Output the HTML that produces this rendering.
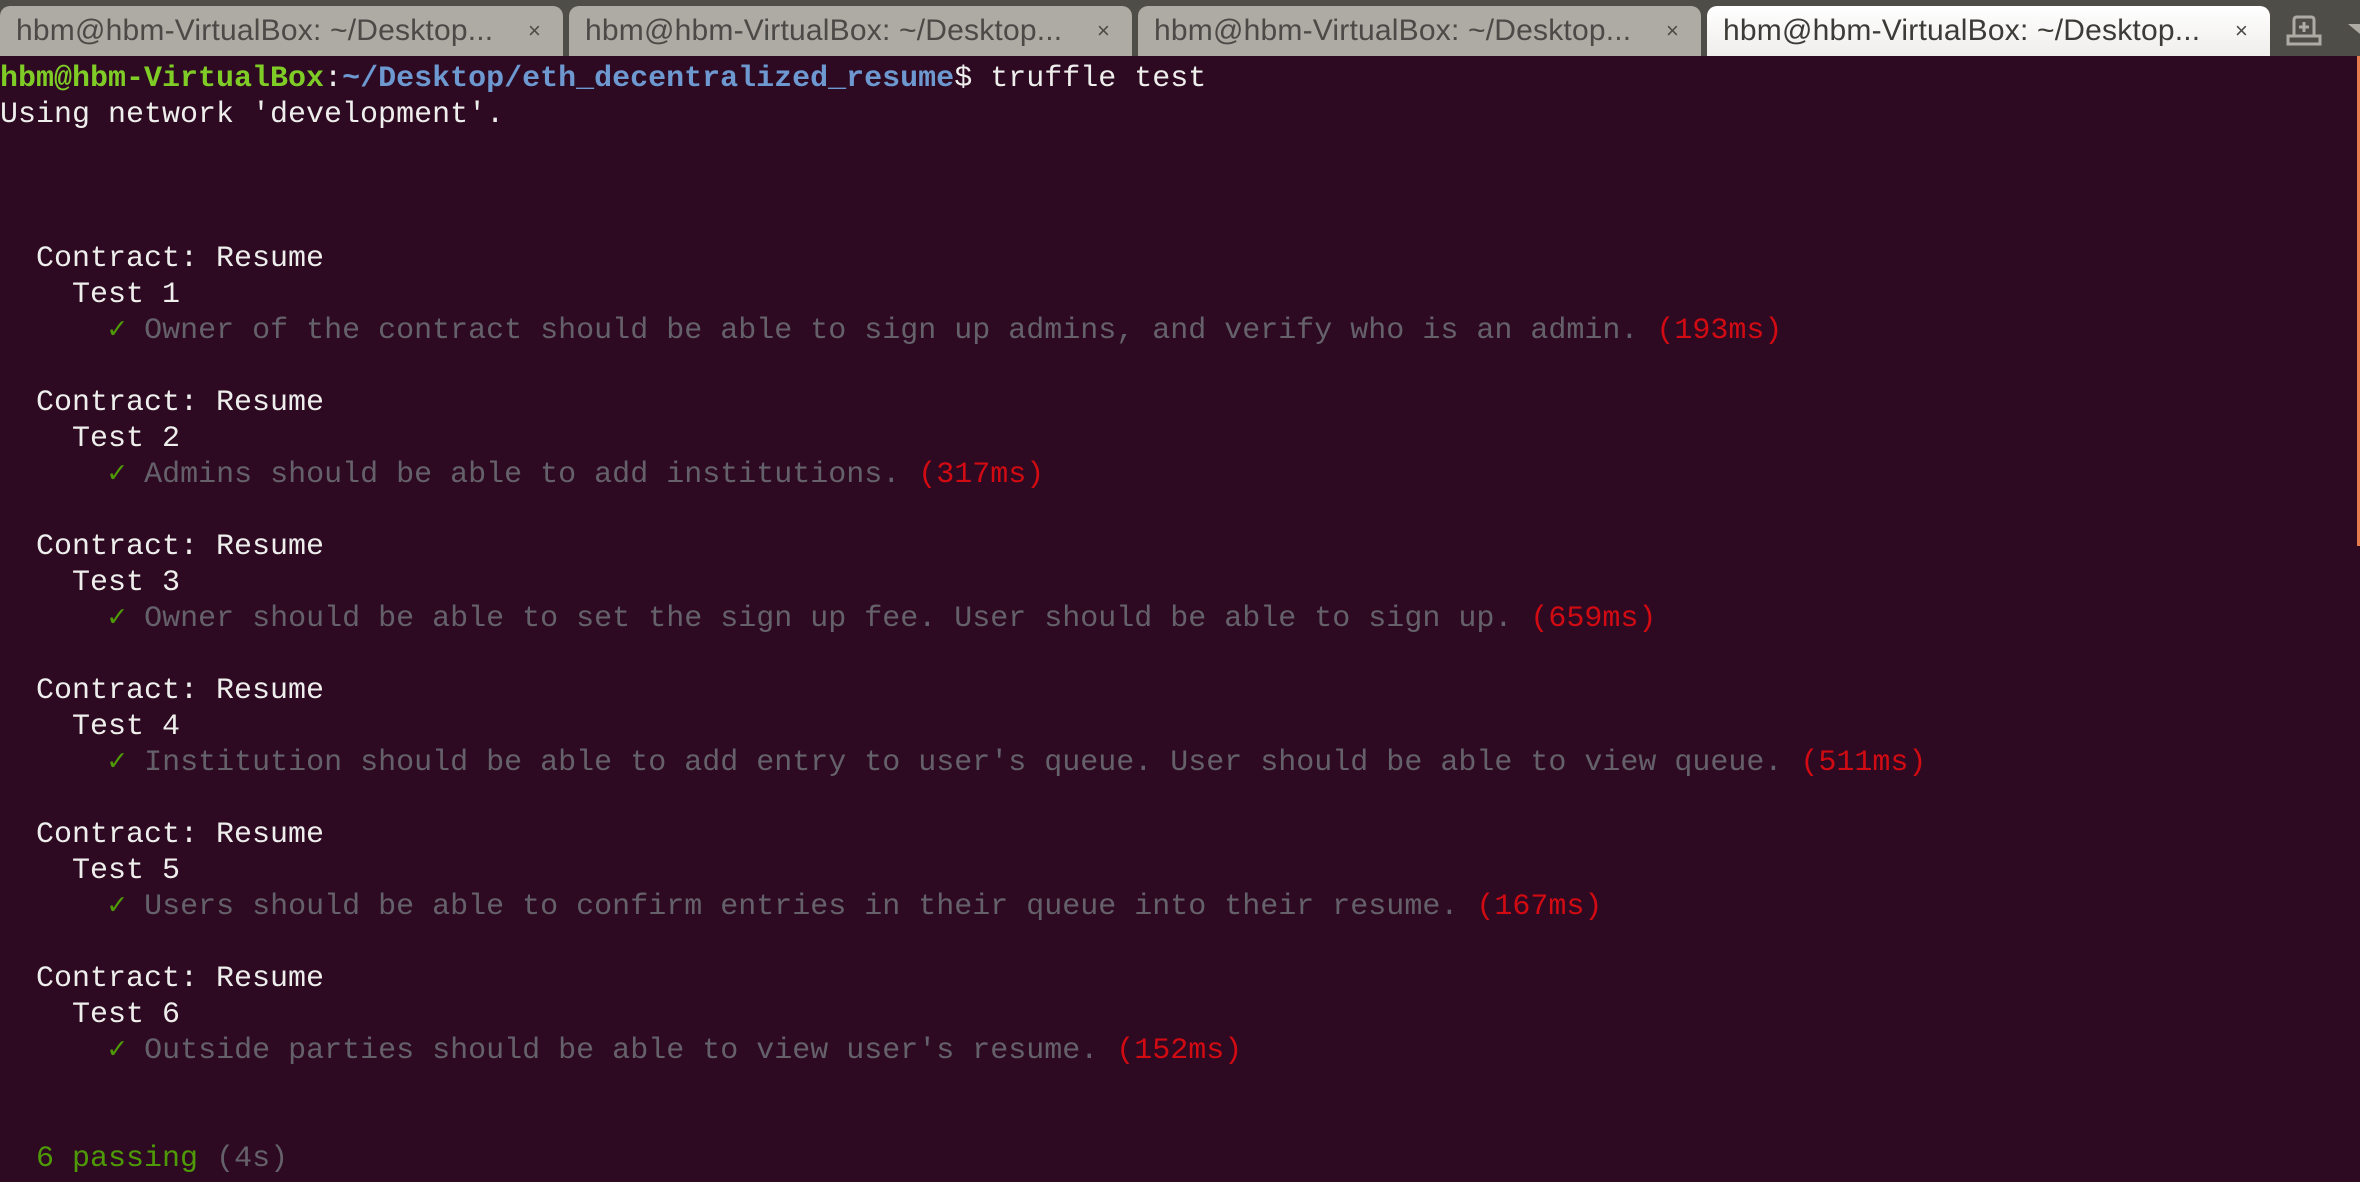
<!DOCTYPE html>
<html><head><meta charset="utf-8"><style>
html,body{margin:0;padding:0;width:2360px;height:1182px;overflow:hidden;background:#2d0a22;}
.bar{position:absolute;left:0;top:0;width:2360px;height:56px;background:#4f4d47;}
.tab{position:absolute;top:6px;height:50px;background:#aeaaa4;border-radius:10px 10px 0 0;font-family:"Liberation Sans",sans-serif;font-size:30px;color:#4c4a47;line-height:50px;white-space:nowrap;overflow:hidden;letter-spacing:0.2px;}
.tab span{position:absolute;left:16px;}
.tab i{position:absolute;right:22px;font-style:normal;font-size:22px;color:#4c4a47;}
.tab.act{background:linear-gradient(#ffffff,#f0eeec);color:#3c3b37;}
pre{position:absolute;left:0;top:61px;margin:0;font-family:"Liberation Mono",monospace;font-size:30px;line-height:36px;color:#eeeeec;}
.g{color:#7fcc26;font-weight:bold}.b{color:#6d98d0;font-weight:bold}
.c{color:#4e9a06}.d{color:#65616a}.r{color:#d20a12}.p{color:#4e9a06}
.sb{position:absolute;right:0;top:56px;width:3px;height:490px;background:#e77a4d;}
</style></head><body>
<div class="bar"></div>
<div class="tab" style="left:0;width:563px"><span>hbm@hbm-VirtualBox: ~/Desktop...</span><i>×</i></div>
<div class="tab" style="left:569px;width:563px"><span>hbm@hbm-VirtualBox: ~/Desktop...</span><i>×</i></div>
<div class="tab" style="left:1138px;width:563px"><span>hbm@hbm-VirtualBox: ~/Desktop...</span><i>×</i></div>
<div class="tab act" style="left:1707px;width:563px"><span>hbm@hbm-VirtualBox: ~/Desktop...</span><i>×</i></div>
<svg style="position:absolute;left:2286px;top:14px" width="36" height="32" viewBox="0 0 36 32"><path d="M8 22V6Q8 3 11 3H25Q28 3 28 6V22M2 22H34V30H2Z" fill="none" stroke="#aeaaa4" stroke-width="3"/><path d="M18 8V18M13 13H23" stroke="#aeaaa4" stroke-width="3"/></svg>
<svg style="position:absolute;left:2348px;top:22px" width="12" height="12"><path d="M0 2L12 2L12 12Z" fill="#aeaaa4"/></svg>
<div class="sb"></div>
<pre><span class="g">hbm@hbm-VirtualBox</span>:<span class="b">~/Desktop/eth_decentralized_resume</span>$ truffle test
Using network 'development'.



  Contract: Resume
    Test 1
      <span class="c">✓</span> <span class="d">Owner of the contract should be able to sign up admins, and verify who is an admin.</span> <span class="r">(193ms)</span>

  Contract: Resume
    Test 2
      <span class="c">✓</span> <span class="d">Admins should be able to add institutions.</span> <span class="r">(317ms)</span>

  Contract: Resume
    Test 3
      <span class="c">✓</span> <span class="d">Owner should be able to set the sign up fee. User should be able to sign up.</span> <span class="r">(659ms)</span>

  Contract: Resume
    Test 4
      <span class="c">✓</span> <span class="d">Institution should be able to add entry to user's queue. User should be able to view queue.</span> <span class="r">(511ms)</span>

  Contract: Resume
    Test 5
      <span class="c">✓</span> <span class="d">Users should be able to confirm entries in their queue into their resume.</span> <span class="r">(167ms)</span>

  Contract: Resume
    Test 6
      <span class="c">✓</span> <span class="d">Outside parties should be able to view user's resume.</span> <span class="r">(152ms)</span>


  <span class="p">6 passing</span> <span class="d">(4s)</span>
</pre>
</body></html>
